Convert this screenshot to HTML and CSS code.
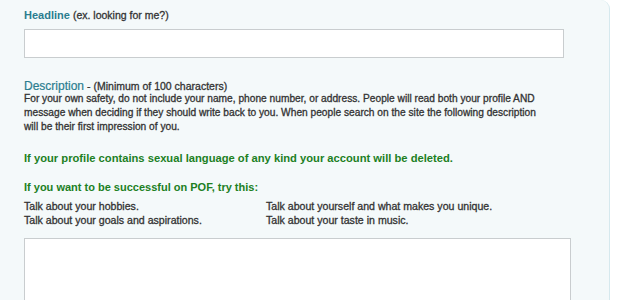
FILE: index.html
```html
<!DOCTYPE html>
<html>
<head>
<meta charset="utf-8">
<link rel="stylesheet" href="styles.css">
</head>
<body>
<div class="panel">
  <div class="label"><span class="title">Headline</span> <span class="hint">(ex. looking for me?)</span></div>
  <div class="input"></div>
  <div class="desc-head"><span class="title">Description</span> <span class="hint">- (Minimum of 100 characters)</span></div>
  <p class="body">For your own safety, do not include your name, phone number, or address. People will read both your profile AND message when deciding if they should write back to you. When people search on the site the following description will be their first impression of you.</p>
  <p class="warn warn-main">If your profile contains sexual language of any kind your account will be deleted.</p>
  <p class="warn tips-head">If you want to be successful on POF, try this:</p>
  <div class="tips">
    <span>Talk about your hobbies.</span>
    <span>Talk about yourself and what makes you unique.</span>
    <span>Talk about your goals and aspirations.</span>
    <span>Talk about your taste in music.</span>
  </div>
  <div class="textarea"></div>
</div>
</body>
</html>
```
FILE: styles.css
```css
html, body { margin: 0; padding: 0; background: #fff; }
body { font-family: "Liberation Sans", Arial, sans-serif; }
.panel {
  width: 585px;
  height: 320px;
  padding: 8px 0 0 24px;
  background: #f4f9fa;
  border-right: 1px solid #d6e9ee;
  border-top-right-radius: 9px;
  overflow: hidden;
}
.label, .desc-head { font-size: 11px; line-height: 14px; }
.title { color: #2b7d8f; font-weight: bold; }
.desc-head .title { font-weight: normal; font-size: 12px; -webkit-text-stroke: 0.2px #2b7d8f; }
.hint, .body, .tips {
  color: #333;
  font-weight: normal;
  -webkit-text-stroke: 0.3px #333;
}
.hint { font-size: 10.5px; }
.input {
  width: 538px;
  height: 27px;
  margin-top: 7px;
  background: #fff;
  border: 1px solid #c9cdcf;
}
.desc-head { margin-top: 21px; }
.body {
  margin: -1px 0 0;
  font-size: 10.2px;
  line-height: 14px;
  width: 515px;
}
.warn {
  margin: 17px 0 0;
  font-size: 11px;
  line-height: 14px;
  font-weight: bold;
  color: #20801f;
}
.warn-main { font-size: 11.2px; }
.tips-head { margin-top: 15px; }
.tips {
  display: grid;
  grid-template-columns: 242px auto;
  font-size: 10.6px;
  line-height: 14px;
  margin-top: 5px;
}
.textarea {
  width: 545px;
  height: 80px;
  margin-top: 11px;
  background: #fff;
  border: 1px solid #c9cdcf;
}
```
